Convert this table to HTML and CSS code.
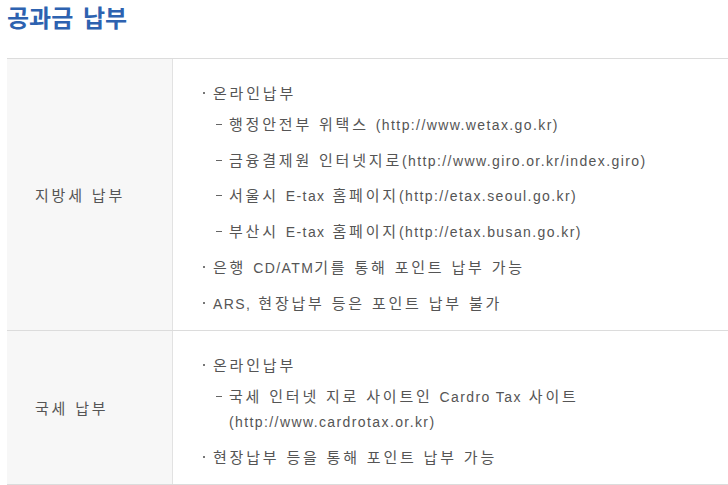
FILE: index.html
```html
<!DOCTYPE html>
<html lang="ko">
<head>
<meta charset="utf-8">
<title>공과금 납부</title>
<link rel="stylesheet" href="styles.css">
</head>
<body>
<div class="page">
  <h2 class="title">공과금 납부</h2>
  <div class="table">
    <div class="row">
      <div class="head">지방세 납부</div>
      <div class="body">
        <ul class="list">
          <li class="item">온라인납부
            <ul class="sub">
              <li class="subitem">행정안전부 위택스 <span class="en">(http://www.wetax.go.kr)</span></li>
              <li class="subitem">금융결제원 인터넷지로<span class="en">(http://www.giro.or.kr/index.giro)</span></li>
              <li class="subitem">서울시 <span class="en">E-tax</span> 홈페이지<span class="en">(http://etax.seoul.go.kr)</span></li>
              <li class="subitem">부산시 <span class="en">E-tax</span> 홈페이지<span class="en">(http://etax.busan.go.kr)</span></li>
            </ul>
          </li>
          <li class="item">은행 <span class="en">CD/ATM</span>기를 통해 포인트 납부 가능</li>
          <li class="item"><span class="en">ARS,</span> 현장납부 등은 포인트 납부 불가</li>
        </ul>
      </div>
    </div>
    <div class="row">
      <div class="head">국세 납부</div>
      <div class="body">
        <ul class="list">
          <li class="item">온라인납부
            <ul class="sub">
              <li class="subitem">국세 인터넷 지로 사이트인 <span class="en">Cardro Tax</span> 사이트<br><span class="en">(http://www.cardrotax.or.kr)</span></li>
            </ul>
          </li>
          <li class="item">현장납부 등을 통해 포인트 납부 가능</li>
        </ul>
      </div>
    </div>
  </div>
</div>
</body>
</html>
```
FILE: styles.css
```css
html, body {
  margin: 0;
  padding: 0;
  background: #fff;
}
.page {
  padding: 0 0 0 7px;
  font-family: "Noto Sans CJK KR", sans-serif;
}
.title {
  margin: 0;
  height: 58px;
  font-size: 24px;
  line-height: 34px;
  font-weight: 700;
  letter-spacing: 0;
  word-spacing: 3px;
  color: #2d62b0;
}
.table {
  border-top: 1px solid #dcdcdc;
}
.row {
  display: grid;
  grid-template-columns: 166px 1fr;
  border-bottom: 1px solid #dcdcdc;
}
.head {
  display: flex;
  align-items: center;
  padding-left: 28px;
  background: #f7f7f7;
  border-right: 1px solid #e2e2e2;
  font-size: 15px;
  letter-spacing: 2.8px;
  color: #555;
}
.body {
  padding: 21px 0 15px 29px;
}
.list, .sub {
  list-style: none;
  margin: 0;
  padding: 0;
}
.item {
  position: relative;
  padding-left: 11px;
  font-size: 15px;
  line-height: 25px;
  letter-spacing: 2.8px;
  color: #555;
}
.item::before {
  content: "";
  position: absolute;
  left: 1px;
  top: 12px;
  width: 2px;
  height: 2px;
  background: #777;
}
.item + .item {
  margin-top: 11px;
}
.sub {
  margin-top: 6px;
}
.subitem {
  position: relative;
  padding-left: 16px;
}
.subitem::before {
  content: "";
  position: absolute;
  left: 3px;
  top: 13px;
  width: 6px;
  height: 1px;
  background: #666;
}
.subitem + .subitem {
  margin-top: 10.5px;
}
.en {
  font-family: "Liberation Sans", sans-serif;
  font-size: 14px;
  line-height: 1;
  letter-spacing: 1.4px;
}
```
